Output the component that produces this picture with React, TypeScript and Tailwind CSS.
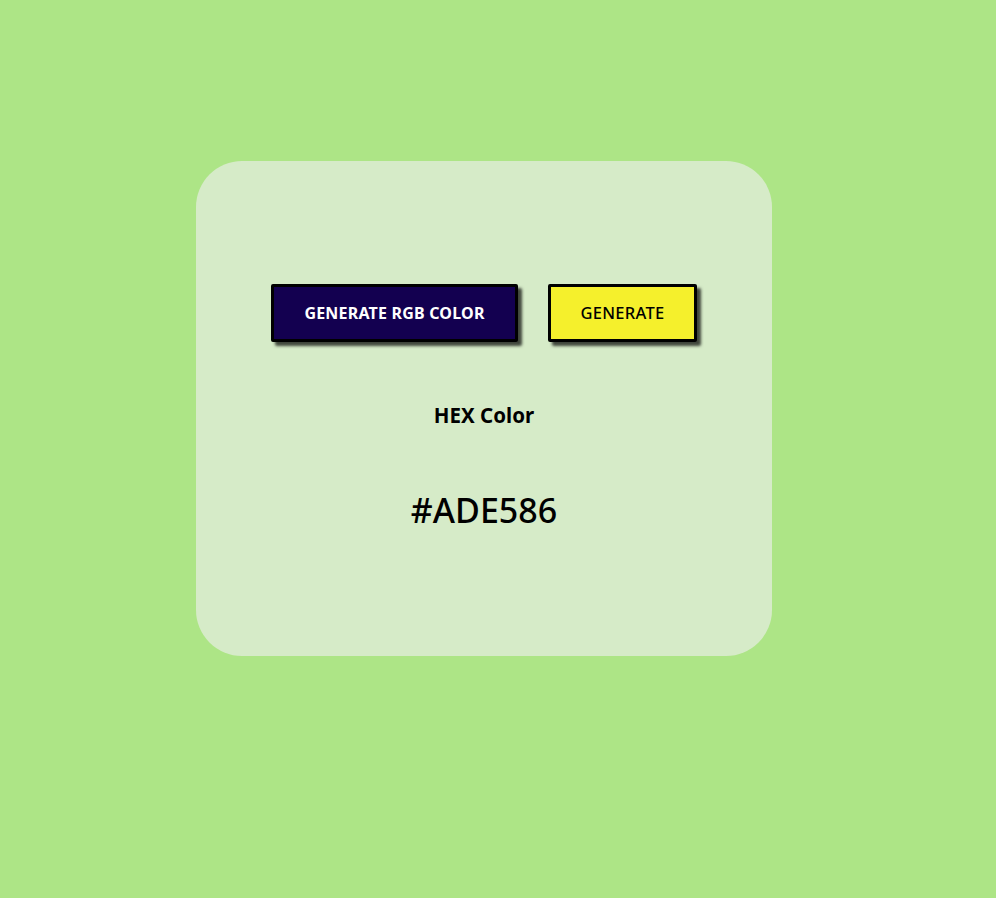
export default function App() {
  const hex = '#ADE586'
  return (
    <div className="min-h-[898px] w-full bg-[#ade586] pt-[161px] pl-[196px]" style={{ fontFamily: '"Noto Sans", "Open Sans", sans-serif' }}>
      <div className="flex h-[495px] w-[576px] flex-col items-center rounded-[46px] bg-[#d6ebc8] pt-[123px]">
        <div className="flex gap-[30px]">
          <button className="h-[58px] w-[247px] rounded-[2px] border-[3px] border-black bg-[#130050] text-[16px] font-bold tracking-[0.2px] text-white shadow-[4px_4px_3px_rgba(0,0,0,0.7)]">
            GENERATE RGB COLOR
          </button>
          <button className="h-[58px] w-[149px] rounded-[2px] border-[3px] border-black bg-[#f5f02c] text-[16.5px] font-medium tracking-[0.3px] text-black shadow-[4px_4px_3px_rgba(0,0,0,0.7)]">
            GENERATE
          </button>
        </div>
        <h2 className="mt-[58px] text-[20.5px] font-bold text-black leading-[30px]">HEX Color</h2>
        <p className="mt-[58px] text-[34px] font-medium text-black leading-[44px]">{hex}</p>
      </div>
    </div>
  )
}
